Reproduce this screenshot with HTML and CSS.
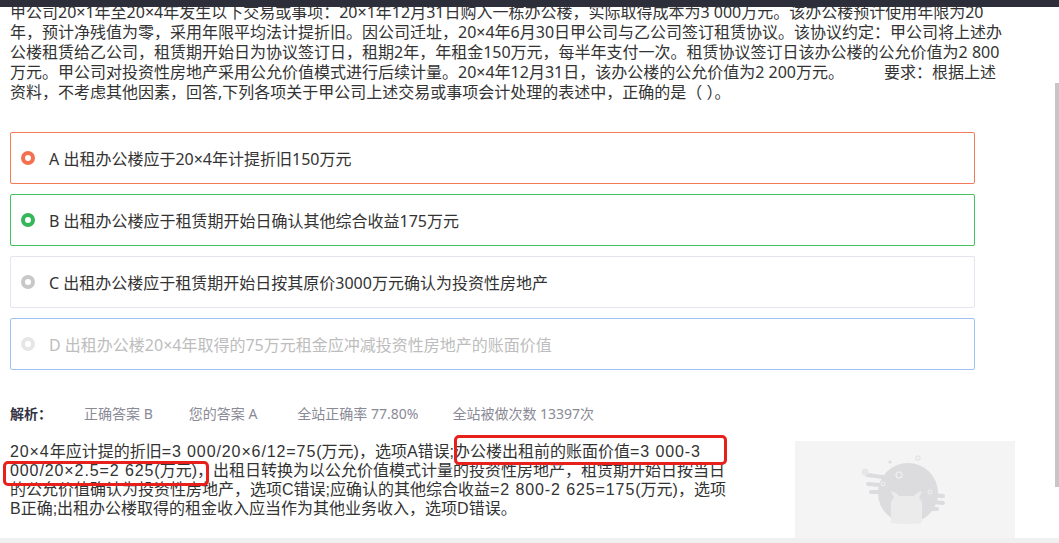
FILE: index.html
```html
<!DOCTYPE html>
<html lang="zh-CN">
<head>
<meta charset="utf-8">
<title>题目解析</title>
<link rel="stylesheet" href="styles.css">
</head>
<body>
<div class="topbar"></div>
<main class="page">
  <p class="question">甲公司20×1年至20×4年发生以下交易或事项：20×1年12月31日购入一栋办公楼，实际取得成本为3 000万元。该办公楼预计使用年限为20年，预计净残值为零，采用年限平均法计提折旧。因公司迁址，20×4年6月30日甲公司与乙公司签订租赁协议。该协议约定：甲公司将上述办公楼租赁给乙公司，租赁期开始日为协议签订日，租期2年，年租金150万元，每半年支付一次。租赁协议签订日该办公楼的公允价值为2 800万元。甲公司对投资性房地产采用公允价值模式进行后续计量。20×4年12月31日，该办公楼的公允价值为2 200万元。　　　要求：根据上述资料，不考虑其他因素，回答,下列各项关于甲公司上述交易或事项会计处理的表述中，正确的是（ ）。</p>

  <ul class="options">
    <li class="option opt-wrong"><span class="radio"></span><span class="label">A 出租办公楼应于20×4年计提折旧150万元</span></li>
    <li class="option opt-right"><span class="radio"></span><span class="label">B 出租办公楼应于租赁期开始日确认其他综合收益175万元</span></li>
    <li class="option opt-plain"><span class="radio"></span><span class="label">C 出租办公楼应于租赁期开始日按其原价3000万元确认为投资性房地产</span></li>
    <li class="option opt-muted"><span class="radio"></span><span class="label">D 出租办公楼20×4年取得的75万元租金应冲减投资性房地产的账面价值</span></li>
  </ul>

  <div class="analysis-head">
    <span class="head-title">解析：</span>
    <span class="meta">正确答案 B</span>
    <span class="meta">您的答案 A</span>
    <span class="meta meta-rate">全站正确率 77.80%</span>
    <span class="meta">全站被做次数 13397次</span>
  </div>

  <div class="analysis-body">
    <div class="analysis-text-wrap">
      <p class="analysis-text"><span class="eq">20×4</span>年应计提的折旧<span class="eq">=3 000/20×6/12=75</span>(万元)，选项A错误;办公楼出租前的账面价值<span class="eq">=3 000-3<br>000/20×2.5=2 625</span>(万元)，出租日转换为以公允价值模式计量的投资性房地产，租赁期开始日按当日<br>的公允价值确认为投资性房地产，选项C错误;应确认的其他综合收益<span class="eq">=2 800-2 625=175</span>(万元)，选项<br>B正确;出租办公楼取得的租金收入应当作为其他业务收入，选项D错误。</p>
      <span class="mark mark-one"></span>
      <span class="mark mark-two"></span>
    </div>
    <div class="video-empty">
      <svg class="empty-art" width="220" height="96" viewBox="0 0 220 96">
        <circle cx="113" cy="52" r="30" fill="#dcdcde"/>
        <g stroke="#dcdcde" stroke-width="4" stroke-linecap="round">
          <line x1="72" y1="34" x2="88" y2="36"/>
          <line x1="73" y1="43" x2="86" y2="44"/>
          <line x1="76" y1="51" x2="85" y2="51"/>
          <line x1="136" y1="54" x2="148" y2="55"/>
          <line x1="138" y1="61" x2="148" y2="62"/>
          <line x1="134" y1="68" x2="142" y2="68"/>
        </g>
        <circle cx="70" cy="31" r="3.5" fill="#e6e6e8"/>
        <circle cx="95" cy="21" r="1.5" fill="#dcdcde"/>
        <circle cx="123" cy="17" r="2.2" fill="none" stroke="#dcdcde" stroke-width="1"/>
        <circle cx="104" cy="34" r="3" fill="none" stroke="#f0f0f0" stroke-width="1.2"/>
        <circle cx="88" cy="43" r="2" fill="none" stroke="#f0f0f0" stroke-width="1"/>
        <circle cx="135" cy="51" r="2" fill="none" stroke="#f0f0f0" stroke-width="1"/>
        <path d="M96 82 V66 Q95 60 99 57 L96 50 Q102 52 104 55 H119 Q121 52 127 50 L124 57 Q128 60 127 66 V82 Q112 84 96 82 Z" fill="#ebebec"/>
      </svg>
      <span class="empty-text">暂无视频解析</span>
    </div>
  </div>
</main>
<div class="scroll-thumb"></div>
<div class="bottom-band"></div>
</body>
</html>
```

FILE: styles.css
```css
html, body {
  margin: 0;
  padding: 0;
  overflow: hidden;
  background: #ffffff;
}

body {
  font-family: "Noto Sans", "Noto Sans CJK SC", sans-serif;
  color: #333333;
  height: 543px;
}

.topbar {
  position: absolute;
  top: 0;
  left: 0;
  right: 0;
  height: 7px;
  background: #2c2e3a;
  z-index: 5;
}

.page {
  padding: 2px 0 0 10px;
}

.question {
  margin: 0;
  width: 1000px;
  font-size: 16px;
  line-height: 20px;
  color: #333333;
}

.options {
  list-style: none;
  margin: 30px 0 0;
  padding: 0;
  width: 965px;
  display: flex;
  flex-direction: column;
  gap: 10px;
}

.option {
  box-sizing: border-box;
  height: 52px;
  border: 1px solid #e4e6f0;
  border-radius: 2px;
  display: flex;
  align-items: center;
  padding-left: 10px;
  font-size: 16px;
  color: #333333;
}

.radio {
  box-sizing: border-box;
  width: 14px;
  height: 14px;
  border-radius: 50%;
  border: 4px solid #c8c8c8;
  margin-right: 14px;
  flex: none;
}

.opt-wrong { border-color: #f47a57; }
.opt-wrong .radio { border-color: #f4714f; }

.opt-right { border-color: #45c062; }
.opt-right .radio { border-color: #36b85a; }

.opt-plain { border-color: #e3e5f0; }
.opt-plain .radio { border-color: #c8c8c8; }

.opt-muted { border-color: #9fc2f5; color: #bdbdbd; }
.opt-muted .radio { border-color: #e6e6e6; }

.analysis-head {
  margin-top: 34px;
  display: flex;
  align-items: center;
  font-size: 14px;
  line-height: 20px;
  color: #8a8a96;
}

.head-title {
  font-weight: bold;
  color: #333344;
  margin-right: 32px;
}

.meta {
  margin-right: 36px;
}

.meta:nth-child(3) {
  margin-right: 40px;
}

.meta-rate {
  margin-right: 34px;
}

.analysis-body {
  display: flex;
  align-items: flex-start;
  margin-top: 18px;
}

.analysis-text-wrap {
  position: relative;
  width: 715px;
  flex: none;
}

.analysis-text {
  margin: 0;
  width: 740px;
  font-family: "Liberation Sans", "Noto Sans CJK SC", sans-serif;
  font-size: 16px;
  line-height: 19px;
  color: #333333;
}

.eq {
  letter-spacing: 0.9px;
}

.mark {
  position: absolute;
  border: 3px solid #e8201c;
  border-radius: 5px;
  box-sizing: border-box;
}

.mark-one {
  left: 444px;
  top: -7px;
  width: 273px;
  height: 30px;
}

.mark-two {
  left: -7px;
  top: 19px;
  width: 206px;
  height: 25px;
}

.video-empty {
  margin-left: 70px;
  margin-top: -1px;
  width: 220px;
  height: 110px;
  background: #f4f4f4;
  display: flex;
  flex-direction: column;
  align-items: center;
}

.empty-art {
  display: block;
  flex: none;
}

.empty-text {
  font-size: 14px;
  line-height: 18px;
  color: #c4c4c4;
}

.scroll-thumb {
  position: absolute;
  right: 0;
  top: 83px;
  width: 4px;
  height: 404px;
  background: #c6c6c6;
}

.bottom-band {
  position: absolute;
  left: 0;
  right: 0;
  top: 538px;
  height: 5px;
  background: #f0f0f0;
}
```
